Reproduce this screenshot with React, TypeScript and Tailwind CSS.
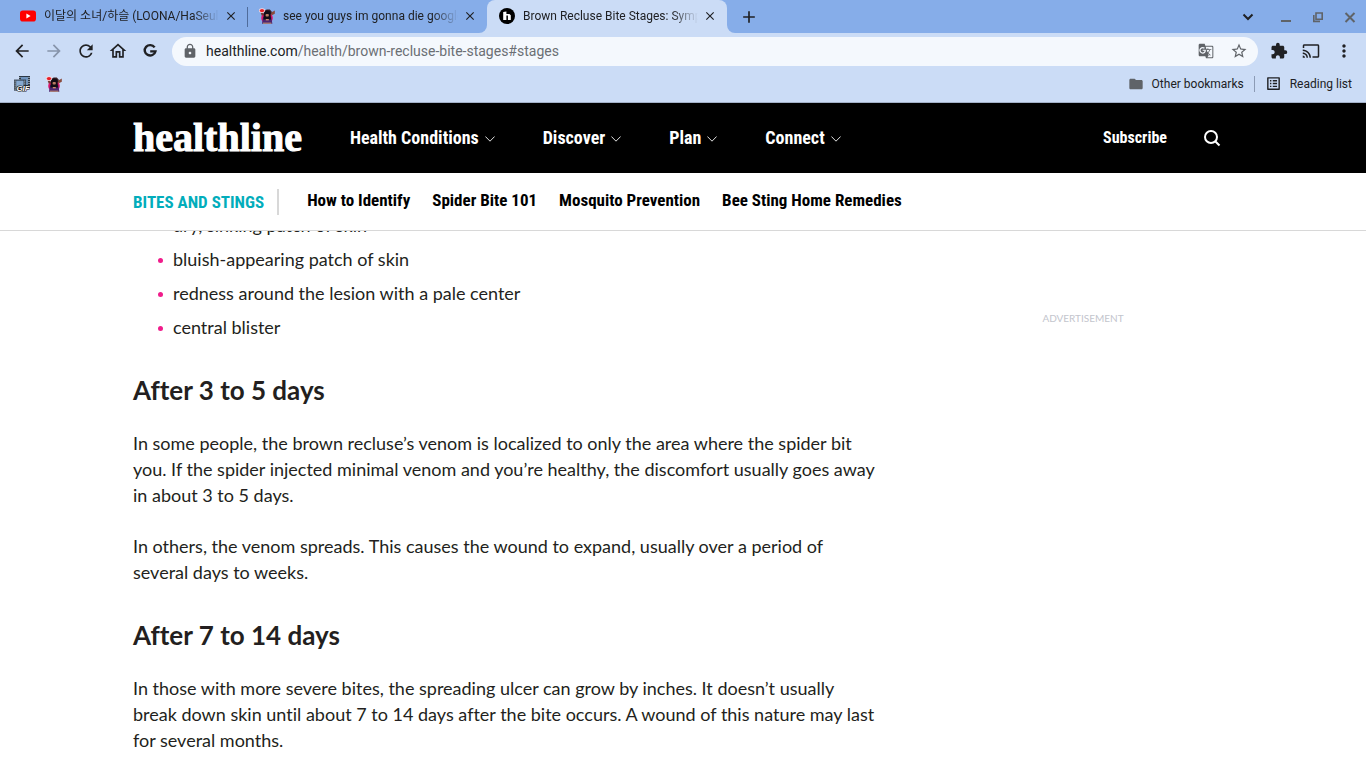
import type { ReactNode } from "react";
import { MdArrowBack, MdArrowForward, MdRefresh, MdOutlineHome, MdLock, MdStarBorder, MdExtension, MdCast, MdMoreVert, MdFolder, MdOutlineListAlt, MdClose, MdAdd, MdGTranslate } from "react-icons/md";

const navItems = ["Health Conditions", "Discover", "Plan", "Connect"];
const subNavItems = ["How to Identify", "Spider Bite 101", "Mosquito Prevention", "Bee Sting Home Remedies"];
const symptoms = [
  "dry, sinking patch of skin",
  "bluish-appearing patch of skin",
  "redness around the lesion with a pale center",
  "central blister",
];

function YoutubeIcon() {
  return (
    <svg viewBox="0 0 16 16" className="size-4 shrink-0">
      <rect x="0" y="2.4" width="16" height="11.2" rx="2.8" fill="#f00" />
      <path d="M6.4 5.6v4.8L10.6 8z" fill="#fff" />
    </svg>
  );
}

function AvatarIcon() {
  return (
    <svg viewBox="0 0 16 16" className="size-4 shrink-0">
      <circle cx="8" cy="10" r="5.8" fill="#e3126b" />
      <path d="M1.6 4.6 4 4l1 3-2.4.6z" fill="#7a3b34" />
      <path d="M15.8 2.4v3.4l-3.4 1.6-.6-2.6z" fill="#8a4a3c" />
      <path d="M5 3.4 7.6 1.4h3.2l2 2.4-.8 2.4H5z" fill="#3a1f24" />
      <path d="m4 9 8.2-.2 1.2 7H3z" fill="#4d2470" />
      <path d="M4.8 5.8a3.4 3.2 0 0 1 6.8 0l.4 5.8H4.4z" fill="#120c16" />
      <rect x="6.6" y="6" width="3.2" height="2.6" rx=".8" fill="#b97c62" />
      <rect x="6.8" y="11" width="3" height="1.4" fill="#c98a6c" />
      <rect x="4" y="14.6" width="8.4" height="1.2" fill="#b58a74" />
      <ellipse cx="3" cy="2.6" rx="3" ry="2.4" fill="#f7d9dc" />
      <ellipse cx="3" cy="2.6" rx="2.2" ry="1.7" fill="#e8202a" />
    </svg>
  );
}

function HealthlineIcon() {
  return (
    <svg viewBox="0 0 16 16" className="size-4 shrink-0">
      <circle cx="8" cy="8" r="8" fill="#000" />
      <path d="M4.2 4 7.4 3.6V6h3l1.4 1.2V12H8.9V7.6H7.4V12H4.2z" fill="#fff" />
    </svg>
  );
}

function GifIcon() {
  return (
    <svg viewBox="0 0 16 16" className="size-4">
      <rect x="5" y="0" width="11" height="10" fill="#2b3846" />
      <rect x="7" y="1" width="7" height="8" fill="#6f93bd" />
      <rect x="0" y="3.6" width="12" height="11" fill="#2b3846" />
      <rect x="2.2" y="4.6" width="7.4" height="9" fill="#86a9d0" />
      <path d="M1.1 4.6v9.4M5.9 1v2.6M15 1v8.6M10.8 4.6V9" stroke="#e4edf7" strokeWidth="1" strokeDasharray="1 1" />
      <text x="2.4" y="15.4" fontSize="8" fontWeight="900" fontStyle="italic" fontFamily="Liberation Sans, sans-serif" fill="#fff" stroke="#1a1a1a" strokeWidth="1.2" paintOrder="stroke">GIF</text>
    </svg>
  );
}

function GoogleIcon() {
  return (
    <svg viewBox="0 0 16 16" className="size-4">
      <path d="M12.6 4.4A5.4 5.2 0 1 0 13.4 8.4H8.2" fill="none" stroke="#202124" strokeWidth="2.4" />
    </svg>
  );
}

function Chevron() {
  return (
    <svg viewBox="0 0 10 6" className="mt-px h-1.5 w-2.5" fill="none" stroke="#e0e0e0" strokeWidth="1">
      <path d="M.4.5 5 5.2 9.6.5" />
    </svg>
  );
}

function Tab({ icon, title, active }: { icon: ReactNode; title: string; active?: boolean }) {
  return (
    <div
      className={`relative flex w-60 items-center pb-px pl-3 pr-[9px] ${
        active ? "rounded-t-lg bg-[#cbdcf6]" : ""
      }`}
    >
      {icon}
      <span className="ml-2 w-[175px] overflow-hidden whitespace-nowrap text-xs text-[#202124] mask-r-from-85% mask-r-to-100%">
        {title}
      </span>
      <button aria-label="Close tab" className="ml-1 flex size-4 items-center justify-center text-[#202124]">
        <MdClose size={14} />
      </button>
      {active && (
        <>
          <span className="absolute -left-2 bottom-0 size-2 bg-[#cbdcf6]">
            <span className="block size-2 rounded-br-lg bg-[#86ade9]" />
          </span>
          <span className="absolute -right-2 bottom-0 size-2 bg-[#cbdcf6]">
            <span className="block size-2 rounded-bl-lg bg-[#86ade9]" />
          </span>
        </>
      )}
    </div>
  );
}

function Browser() {
  return (
    <div className="bg-[#cbdcf6] font-[Roboto,'Noto_Sans_CJK_KR',sans-serif] text-[#202124]">
      <div className="flex h-[33px] bg-[#86ade9] pl-2">
        <Tab icon={<YoutubeIcon />} title="이달의 소녀/하슬 (LOONA/HaSeul)" />
        <span className="-mx-px h-5 w-px self-center bg-[#4f6c9b]" />
        <Tab icon={<AvatarIcon />} title="see you guys im gonna die google" />
        <Tab icon={<HealthlineIcon />} title="Brown Recluse Bite Stages: Symptoms" active />
        <button aria-label="New tab" className="ml-3 flex items-center">
          <MdAdd size={20} />
        </button>
        <div className="ml-auto flex items-center gap-5 pr-2.5 text-[#5f6368]">
          <button aria-label="Search tabs" className="mr-1.5 text-[#202124]">
            <svg viewBox="0 0 12 12" className="size-3" fill="none" stroke="currentColor" strokeWidth="2">
              <path d="m1.5 3.5 4.5 4.5 4.5-4.5" />
            </svg>
          </button>
          <button aria-label="Minimize">
            <svg viewBox="0 0 12 12" className="size-3"><path d="M1 9h10v2H1z" fill="currentColor" /></svg>
          </button>
          <button aria-label="Restore">
            <svg viewBox="0 0 12 12" className="size-3" fill="none" stroke="currentColor" strokeWidth="1.6">
              <path d="M4 2h6.2v6.2H4zM1.8 4v6.4H8" />
            </svg>
          </button>
          <button aria-label="Close window">
            <svg viewBox="0 0 12 12" className="size-3" fill="none" stroke="currentColor" strokeWidth="2">
              <path d="m1.5 2 9 9M10.5 2l-9 9" />
            </svg>
          </button>
        </div>
      </div>
      <div className="flex h-9 items-center px-3">
        <div className="flex gap-3">
          <button aria-label="Back"><MdArrowBack size={20} /></button>
          <button aria-label="Forward" className="text-[#8794aa]"><MdArrowForward size={20} /></button>
          <button aria-label="Reload"><MdRefresh size={20} /></button>
          <button aria-label="Home"><MdOutlineHome size={20} /></button>
          <button aria-label="Google" className="flex size-5 items-center justify-center"><GoogleIcon /></button>
        </div>
        <div className="ml-3 flex h-[29px] flex-1 items-center rounded-full bg-[#f4f8fd] px-2.5 text-[#5f6368]">
          <MdLock size={16} />
          <a href="#stages" className="ml-2 flex-1 text-sm text-[#6b6f74]">
            <span className="text-[#202124]">healthline.com</span>/health/brown-recluse-bite-stages#stages
          </a>
          <button aria-label="Translate this page" className="mr-4"><MdGTranslate size={16} /></button>
          <button aria-label="Bookmark this tab"><MdStarBorder size={18} /></button>
        </div>
        <div className="ml-3 flex items-center gap-3.5">
          <button aria-label="Extensions"><MdExtension size={18} /></button>
          <button aria-label="Cast"><MdCast size={18} /></button>
          <button aria-label="Menu"><MdMoreVert size={20} /></button>
        </div>
      </div>
      <div className="flex h-[34px] items-center border-b border-[#a3b1c8] px-3.5 pb-1 text-xs">
        <button aria-label="GIF maker"><GifIcon /></button>
        <button aria-label="Bookmark" className="ml-4"><AvatarIcon /></button>
        <button className="ml-auto flex items-center gap-2">
          <MdFolder size={16} className="text-[#5f6368]" />
          Other bookmarks
        </button>
        <span className="mx-2.5 h-4 w-px bg-[#8c9bb5]" />
        <button className="flex items-center gap-2">
          <MdOutlineListAlt size={17} />
          Reading list
        </button>
      </div>
    </div>
  );
}

function SiteHeader() {
  return (
    <header className="relative font-['Roboto_Condensed',Roboto,sans-serif] font-bold">
      <div className="bg-black text-white">
        <div className="mx-auto flex h-[70px] max-w-[1100px] items-center">
          <a
            href="#home"
            className="mr-12 font-['Liberation_Serif',serif] text-[40px] leading-10 [-webkit-text-stroke:1px_#fff]"
          >
            healthline
          </a>
          <nav className="flex gap-12 text-lg">
            {navItems.map((item) => (
              <button key={item} className="flex items-center gap-1.5">
                {item}
                <Chevron />
              </button>
            ))}
          </nav>
          <a href="#subscribe" className="ml-auto text-base">Subscribe</a>
          <button aria-label="Search" className="ml-9 mr-3">
            <svg viewBox="0 0 18 18" className="size-[18px]" fill="none" stroke="#fff" strokeWidth="2">
              <circle cx="8" cy="8" r="6" />
              <path d="m12.2 12.2 4.3 4.3" />
            </svg>
          </button>
        </div>
      </div>
      <div className="border-b border-[#d8d8d8] bg-white">
        <div className="mx-auto flex h-[57px] max-w-[1100px] items-center text-[17px]">
          <a href="#bites" className="border-r-2 border-[#d8d8d8] pr-[13px] leading-[26px] text-[#02adbb]">BITES AND STINGS</a>
          <nav className="ml-7 flex gap-[22px] pb-0.5">
            {subNavItems.map((item) => (
              <a key={item} href="#topic" className="text-black">{item}</a>
            ))}
          </nav>
        </div>
      </div>
    </header>
  );
}

export default function App() {
  return (
    <div className="flex h-screen flex-col overflow-hidden bg-white">
      <Browser />
      <SiteHeader />
      <main className="min-h-0 flex-1 overflow-hidden font-[Lato,sans-serif] text-[#231f20]">
        <div className="mx-auto flex max-w-[1100px] gap-[50px]">
          <article className="-mt-[19px] flex-1 pr-1 text-lg leading-[26px] [font-variant-ligatures:none]">
            <ul className="space-y-2 pl-10">
              {symptoms.map((text) => (
                <li key={text} className="relative">
                  <span className="absolute -left-[15px] top-3 size-[5px] rounded-full bg-[#f01c8b]" />
                  {text}
                </li>
              ))}
            </ul>
            <h2 className="mt-[34px] text-[26px] font-bold leading-8">After 3 to 5 days</h2>
            <p className="mt-6">
              In some people, the brown recluse’s venom is localized to only the area where the spider bit
              you. If the spider injected minimal venom and you’re healthy, the discomfort usually goes away
              in about 3 to 5 days.
            </p>
            <p className="mt-[25px]">
              In others, the venom spreads. This causes the wound to expand, usually over a period of
              several days to weeks.
            </p>
            <h2 className="mt-[34px] text-[26px] font-bold leading-8">After 7 to 14 days</h2>
            <p className="mt-6">
              In those with more severe bites, the spreading ulcer can grow by inches. It doesn’t usually
              break down skin until about 7 to 14 days after the bite occurs. A wound of this nature may last
              for several months.
            </p>
          </article>
          <aside className="w-[300px] pt-[79px] text-center text-[10px] leading-4 text-[#c3c5cd]">ADVERTISEMENT</aside>
        </div>
      </main>
    </div>
  );
}
